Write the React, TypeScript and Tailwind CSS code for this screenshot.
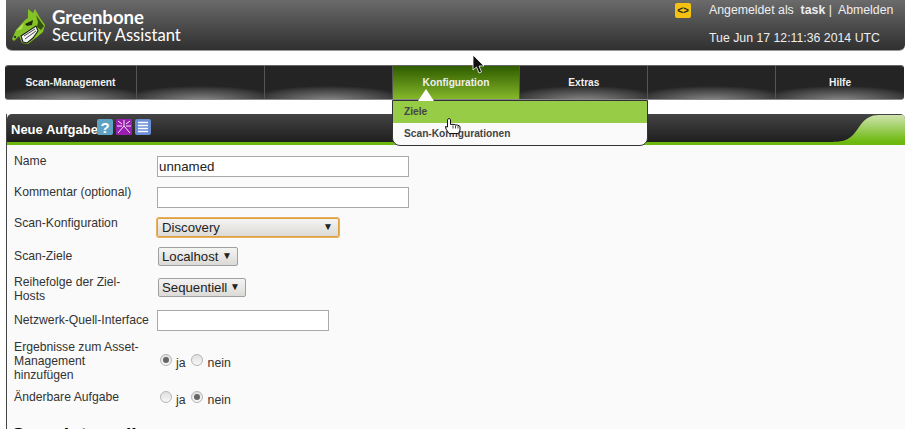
const navItems = ["Scan-Management", "", "", "Konfiguration", "Extras", "", "Hilfe"]

const Logo = () => (
  <svg width="34" height="36" viewBox="12 8 34 36" className="shrink-0">
    <path d="M12 39 L16 30 L25 20 L28 18 L28 9 L33 13 L35 9 L40 18 L45 25 L43 32 L37 37 L28 44 L22 43 L19 36 L14 41 Z" fill="#84c225" />
    <path d="M21 36 L36 26 L38 31 L33 38 L27 43 L23 42 Z" fill="#f4f4f4" stroke="#1e1e1e" strokeWidth="1.1" />
    <path d="M24 36 L35 29 M25 39 L36 31" stroke="#333" strokeWidth="0.9" />
    <path d="M25 24 L33 20 L32 25 L27 26 Z" fill="#1f2a10" />
    <path d="M36 15 L41 22 L44 26 L41 30 L37 27 L38 22 Z" fill="#35500f" />
    <path d="M16 31 L24 23 L22 29 Z" fill="#aee05c" />
    <circle cx="15" cy="37" r="1.2" fill="#2e4510" />
  </svg>
)

const HelpIcons = () => (
  <div className="flex gap-[3px] mb-[7px] -ml-[1px]">
    <svg width="16" height="16" viewBox="0 0 16 16">
      <rect x="0" y="0" width="16" height="16" rx="2" fill="#5fa3c4" />
      <text x="8" y="13.5" textAnchor="middle" fontSize="15" fontWeight="700" fill="#fff" fontFamily="Liberation Sans">?</text>
    </svg>
    <svg width="16" height="16" viewBox="0 0 16 16">
      <rect x="0" y="0" width="16" height="16" rx="1" fill="#9a1fb0" />
      <path d="M8 7 L8 1 M8 7 L2 14 M8 7 L14 14 M6 5 L2 2 M10 5 L14 2 M6 7 L1 7 M10 7 L15 7" stroke="#fff" strokeWidth="0.9" />
    </svg>
    <svg width="16" height="16" viewBox="0 0 16 16">
      <rect x="0" y="0" width="16" height="16" rx="2" fill="#6a8fd6" />
      <path d="M3 3.5 H13 M3 6.5 H13 M3 9.5 H13 M3 12.5 H13" stroke="#fff" strokeWidth="1.6" />
    </svg>
  </div>
)

const TextInput = ({ value, className }: { value?: string; className: string }) => (
  <div className={`h-[21px] bg-white border border-[#a9a9a9] pl-[1px] text-[13.3px] leading-[19px] text-[#222] ${className}`}>{value}</div>
)

const Select = ({ label, className, labelClass = "" }: { label: string; className: string; labelClass?: string }) => (
  <div className={`h-[19px] flex items-center justify-between pl-[3px] pr-[5px] rounded-[2px] border border-[#a0a0a0] bg-gradient-to-b from-[#f4f4f3] to-[#dcdad6] text-[13.2px] leading-[18px] text-[#222] ${className}`}>
    <span className={`mt-[1px] ${labelClass}`}>{label}</span>
    <span className="text-[10px] -mt-[1px]">▼</span>
  </div>
)

const Radio = ({ checked }: { checked?: boolean }) => (
  <span className="w-[12px] h-[12px] rounded-full border border-[#b5b5b5] bg-gradient-to-b from-[#e0e0e0] to-[#f8f8f8] flex items-center justify-center">
    {checked && <span className="w-[6px] h-[6px] rounded-full bg-[#666]" />}
  </span>
)

const Radios = ({ ja }: { ja: boolean }) => (
  <div className="flex items-center ml-[3px] text-[12.3px] text-[#333]">
    <Radio checked={ja} />
    <span className="ml-[4px] mt-[6px]">ja</span>
    <span className="ml-[5px]"><Radio checked={!ja} /></span>
    <span className="ml-[5px] mt-[6px]">nein</span>
  </div>
)

const Row = ({ label, height, children, labelTop = 0 }: { label: string; height: string; children: React.ReactNode; labelTop?: number }) => (
  <div className={`flex ${height}`}>
    <div className="w-[143px] shrink-0 leading-[14px] text-[12.2px] text-[#333] whitespace-pre-line" style={{ paddingTop: labelTop }}>{label}</div>
    <div className="flex flex-col">{children}</div>
  </div>
)

const App = () => {
  return (
    <div className="w-[909px] h-[429px] overflow-hidden bg-white relative" style={{ fontFamily: '"Liberation Sans", Arial, sans-serif' }}>
      {/* header */}
      <div className="ml-[6px] mr-[4px] h-[51px] rounded-b-[6px] bg-gradient-to-b from-[#6b6b6b] to-[#303030] border-b border-[#999] flex justify-between">
        <div className="flex items-center pl-[6px] pt-[1px]">
          <Logo />
          <div className="ml-[6px] text-white pt-[1px]" style={{ fontFamily: "Lato, sans-serif" }}>
            <div className="h-[17px] text-[18.6px] font-bold leading-[17px]">Greenbone</div>
            <div className="h-[18px] text-[16.6px] font-normal leading-[18px]">Security Assistant</div>
          </div>
        </div>
        <div className="flex">
          <div className="mt-[3px] w-[16px] h-[15px] rounded-[2px] bg-[#f5c211] text-[#222] text-[10px] font-bold leading-[15px] text-center mr-[18px]">&lt;&gt;</div>
          <div className="w-[196px] text-[12.3px] text-[#eee]">
            <div className="mt-[3px] h-[14px] leading-[14px] whitespace-nowrap">
              Angemeldet als&nbsp; <b>task</b> |&nbsp; Abmelden
            </div>
            <div className="mt-[14px] leading-[14px]">Tue Jun 17 12:11:36 2014 UTC</div>
          </div>
        </div>
      </div>

      {/* navigation */}
      <div className="mt-[14px] ml-[5px] mr-[5px] h-[35px] rounded-[3px] overflow-hidden flex border-y border-t-[#666] border-b-[#888]">
        {navItems.map((item, i) => (
          <div
            key={i}
            className={`h-full flex items-center justify-center pt-[1px] text-[10.2px] font-bold text-[#f0f0f0] border-r border-[#555] last:border-r-0 ${
              i === 0 ? "w-[132px]" : "w-[128px]"
            } ${
              item === "Konfiguration"
                ? "bg-gradient-to-b from-[#2f5c00] to-[#86b82a]"
                : "bg-[radial-gradient(ellipse_65%_45%_at_50%_105%,#8a8a8a,#3c3c3c_80%,#242424)]"
            }`}
          >
            {item}
          </div>
        ))}
      </div>

      {/* panel */}
      <div className="mt-[14px] ml-[6px] mr-[4px] h-[320px] bg-[#fafafa] border-l border-[#444]">
        <div className="relative h-[31px] rounded-t-[5px] bg-gradient-to-b from-[#444] to-[#1f1f1f] border-b-[3px] border-[#6cb80e] flex items-end overflow-hidden">
          <span className="ml-[4px] mb-[5px] text-[13px] font-bold text-white leading-[15px]">Neue Aufgabe</span>
          <HelpIcons />
          <svg width="76" height="28" viewBox="0 0 76 28" className="absolute right-0 top-0">
            <defs>
              <linearGradient id="curve" x1="0" y1="0" x2="0" y2="1">
                <stop offset="0" stopColor="#cfe3ae" />
                <stop offset="1" stopColor="#6cb80e" />
              </linearGradient>
            </defs>
            <path d="M0 28 C18 28 22 25 30 13 C36 4 42 1 50 1 L76 1 L76 28 Z" fill="url(#curve)" />
          </svg>
        </div>
        <div className="pl-[7px] pt-[9px]">
          <Row label="Name" height="h-[31px]"><TextInput value="unnamed" className="w-[252px] mt-[2px]" /></Row>
          <Row label="Kommentar (optional)" height="h-[31px]"><TextInput className="w-[252px] mt-[2px]" /></Row>
          <Row label="Scan-Konfiguration" height="h-[31px]">
            <Select label="Discovery" labelClass="ml-[1px]" className="w-[182px] mt-[2px] border-[#e0a040] shadow-[0_0_0_1px_#e6b060]" />
          </Row>
          <Row label="Scan-Ziele" height="h-[27px]" labelTop={2}>
            <Select label="Localhost" className="w-[80px] ml-[1px]" />
          </Row>
          <Row label={"Reihefolge der Ziel-\nHosts"} height="h-[36px]" labelTop={1}>
            <Select label="Sequentiell" className="w-[88px] ml-[1px] mt-[4px]" />
          </Row>
          <Row label="Netzwerk-Quell-Interface" height="h-[28px]" labelTop={3}>
            <TextInput className="w-[172px]" />
          </Row>
          <Row label={"Ergebnisse zum Asset-\nManagement\nhinzufügen"} height="h-[51px]" labelTop={2}>
            <div className="mt-[10px]"><Radios ja={true} /></div>
          </Row>
          <Row label="Änderbare Aufgabe" height="h-[36px]" labelTop={1}>
            <div className="-mt-[4px]"><Radios ja={false} /></div>
          </Row>
          <div className="-ml-[2px] text-[19px] font-bold text-black leading-[20px]">Scan-Intervall</div>
        </div>
      </div>

      {/* dropdown */}
      <div className="absolute left-[392px] top-[100px] w-[256px] h-[46px] bg-[#fafafa] border border-[#333] rounded-b-[8px] overflow-hidden text-[10.2px] font-bold text-[#444]">
        <div className="h-[22px] bg-[#96cc46] pl-[11px] leading-[22px]">Ziele</div>
        <div className="h-[22px] pl-[11px] leading-[22px]">Scan-Konfigurationen</div>
      </div>
      <div className="absolute left-[418px] top-[89px] w-0 h-0 border-l-[8px] border-r-[8px] border-b-[12px] border-l-transparent border-r-transparent border-b-white" />

      {/* cursors */}
      <svg width="14" height="20" viewBox="0 0 14 20" className="absolute left-[472px] top-[55px]">
        <path d="M1 0 L1 15 L4.5 12 L7 18 L9.5 17 L7 11 L12 11 Z" fill="#111" stroke="#fff" strokeWidth="0.8" />
      </svg>
      <svg width="16" height="17" viewBox="0 0 16 17" className="absolute left-[445px] top-[118px]">
        <path d="M2.5 1.8 C2.5 0.2 5.5 0.2 5.5 1.8 L5.5 6.5 L8 6.3 L10.5 6.8 L13 7.2 L15 8.5 L15 12 L13.5 15.5 L4 15.5 L1 11 L0.5 8.5 L2.5 9 Z" fill="#fff" stroke="#111" strokeWidth="1" />
        <path d="M8 7.5 V10.5 M10.5 7.5 V10.5 M13 8 V10.5" stroke="#111" strokeWidth="0.8" />
      </svg>
    </div>
  )
}

export default App
